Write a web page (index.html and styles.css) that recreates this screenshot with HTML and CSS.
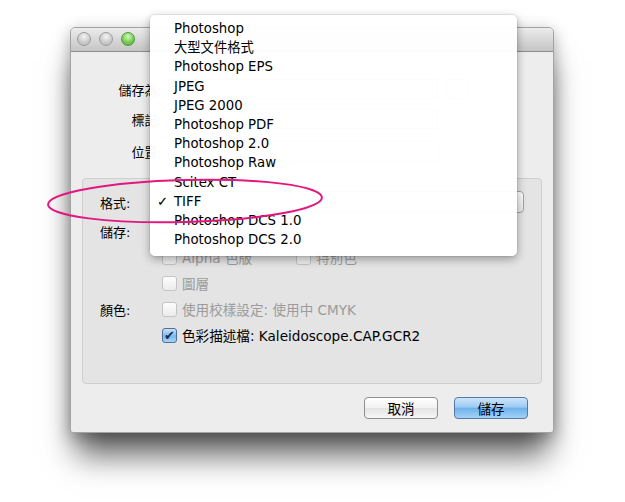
FILE: index.html
```html
<!DOCTYPE html>
<html lang="zh-Hant">
<head>
    <meta charset="UTF-8">
    <meta name="viewport" content="width=device-width, initial-scale=1.0">
    <title>儲存為</title>
    <link rel="stylesheet" href="styles.css">
</head>
<body>
    <div class="stage">
        <!-- Окно диалога -->
        <div class="window">
            <div class="titlebar">
                <span class="lights">
                    <i class="light"></i>
                    <i class="light"></i>
                    <i class="light green"></i>
                </span>
            </div>

            <div class="content">
                <div class="top-form">
                    <div class="row">
                        <span class="label">儲存為:</span>
                        <div class="field"></div>
                        <span class="disclose"></span>
                    </div>
                    <div class="row">
                        <span class="label">標記:</span>
                        <div class="field"></div>
                    </div>
                    <div class="row third">
                        <span class="label">位置:</span>
                        <div class="popup place"></div>
                    </div>
                </div>

                <div class="group">
                    <div class="grow first">
                        <span class="glabel">格式:</span>
                        <div class="popup format"></div>
                    </div>
                    <div class="grow">
                        <span class="glabel">儲存:</span>
                        <span class="check col"><i class="box"></i></span>
                        <span class="check"><i class="box"></i></span>
                    </div>
                    <div class="grow">
                        <span class="glabel"></span>
                        <span class="check off col"><i class="box"></i>Alpha 色版</span>
                        <span class="check off"><i class="box"></i>特別色</span>
                    </div>
                    <div class="grow">
                        <span class="glabel"></span>
                        <span class="check off"><i class="box"></i>圖層</span>
                    </div>
                    <div class="grow">
                        <span class="glabel">顏色:</span>
                        <span class="check off"><i class="box"></i>使用校樣設定: 使用中 CMYK</span>
                    </div>
                    <div class="grow">
                        <span class="glabel"></span>
                        <span class="check on"><i class="box">&#10004;</i>色彩描述檔: Kaleidoscope.CAP.GCR2</span>
                    </div>
                </div>

                <div class="buttons">
                    <button class="btn">取消</button>
                    <button class="btn primary">儲存</button>
                </div>
            </div>
        </div>

        <!-- Выпадающее меню форматов -->
        <ul class="menu">
            <li>Photoshop</li>
            <li>大型文件格式</li>
            <li>Photoshop EPS</li>
            <li>JPEG</li>
            <li>JPEG 2000</li>
            <li>Photoshop PDF</li>
            <li>Photoshop 2.0</li>
            <li>Photoshop Raw</li>
            <li>Scitex CT</li>
            <li class="checked">TIFF</li>
            <li>Photoshop DCS 1.0</li>
            <li>Photoshop DCS 2.0</li>
        </ul>

        <!-- Пометка вокруг строки формата -->
        <svg class="ring" width="300" height="60" viewBox="0 0 300 60">
            <ellipse cx="139" cy="31" rx="137" ry="21" transform="rotate(-1.5 139 31)"
                     fill="none" stroke="#e2177f" stroke-width="2"/>
        </svg>
    </div>
</body>
</html>
```

FILE: styles.css
```css
body {
    margin: 0;
    background: #fff;
    font-family: "DejaVu Sans", "Noto Sans CJK TC", sans-serif;
    font-size: 13px;
    color: #000;
}

.stage {
    position: relative;
    width: 625px;
    height: 502px;
    overflow: hidden;
}

/* Окно */
.window {
    box-sizing: border-box;
    width: 484px;
    height: 406px;
    margin: 27px 0 0 70px;
    display: flex;
    flex-direction: column;
    background: #ededed;
    border: 1px solid #a3a3a3;
    border-radius: 5px 5px 3px 3px;
    box-shadow: 0 28px 30px -6px rgba(0, 0, 0, 0.62), 0 4px 16px rgba(0, 0, 0, 0.3);
}

.titlebar {
    position: relative;
    height: 23px;
    flex: none;
    background: linear-gradient(to bottom, #ececec, #d4d4d4 60%, #c6c6c6);
    border-bottom: 1px solid #8c8c8c;
    border-radius: 4px 4px 0 0;
}

.lights {
    position: absolute;
    left: 6px;
    top: 4px;
    display: flex;
    gap: 8px;
}

.light {
    width: 12px;
    height: 12px;
    border-radius: 50%;
    border: 1px solid #9c9c9c;
    background: radial-gradient(circle at 50% 30%, #f4f4f4, #c9c9c9 60%, #b8b8b8);
}

.light.green {
    border-color: #4f9a36;
    background: radial-gradient(circle at 50% 30%, #d6f7c4, #79cc55 55%, #4fa832);
}

.content {
    flex: 1;
    padding: 26px 11px 0 11px;
    display: flex;
    flex-direction: column;
}

/* Верхние поля */
.top-form {
    display: flex;
    flex-direction: column;
    gap: 8px;
}

.row {
    display: flex;
    align-items: center;
    height: 22px;
}

.row.third {
    margin-top: 2px;
}

.label {
    width: 80px;
    text-align: right;
    padding-right: 6px;
}

.field {
    width: 270px;
    height: 20px;
    border: 1px solid #9a9a9a;
    background: #fff;
    box-sizing: border-box;
}

.disclose {
    width: 20px;
    height: 18px;
    margin-left: 8px;
    border: 1px solid #a0a0a0;
    border-radius: 4px;
    background: linear-gradient(to bottom, #fff, #e3e3e3);
}

.popup {
    box-sizing: border-box;
    height: 21px;
    border: 1px solid #a3a3a3;
    border-radius: 4px;
    background: linear-gradient(to bottom, #fff, #e6e6e6);
}

.popup.place {
    width: 272px;
}

/* Группа параметров */
.group {
    box-sizing: border-box;
    height: 206px;
    margin-top: 16px;
    padding: 12px 0 0 17px;
    background: #e4e4e4;
    border: 1px solid #cfcfcf;
    border-radius: 4px;
}

.grow {
    display: flex;
    align-items: center;
    height: 26px;
}

.grow.first {
    height: 22px;
    margin-bottom: 5px;
}

.glabel {
    width: 62px;
    flex: none;
}

.popup.format {
    width: 362px;
    height: 22px;
}

.check {
    display: flex;
    align-items: center;
    gap: 5px;
    font-size: 13.6px;
}

.check.col {
    width: 134px;
}

.check.off {
    color: #9b9b9b;
}

.box {
    box-sizing: border-box;
    width: 15px;
    height: 15px;
    border: 1px solid #c4c4c4;
    border-radius: 3px;
    background: linear-gradient(to bottom, #fdfdfd, #ececec);
    font-style: normal;
    font-size: 13px;
    line-height: 13px;
    text-align: center;
    color: #1c2c52;
}

.check.on .box {
    border-color: #4f6f9e;
    background: linear-gradient(to bottom, #c9e2f9, #7db8ec 55%, #a9d3f6);
}

/* Кнопки */
.buttons {
    display: flex;
    justify-content: flex-end;
    gap: 16px;
    margin-top: 13px;
    padding-right: 14px;
}

.btn {
    width: 74px;
    height: 22px;
    font: inherit;
    font-size: 13.5px;
    color: #000;
    border: 1px solid #8e8e8e;
    border-radius: 4px;
    background: linear-gradient(to bottom, #ffffff, #f1f1f1 50%, #e4e4e4 51%, #f6f6f6);
    padding: 0;
}

.btn.primary {
    border-color: #5877a6;
    background: linear-gradient(to bottom, #cde5fa, #9ccbf3 45%, #6fb2ec 52%, #a3d2f7);
}

/* Меню форматов */
.menu {
    position: absolute;
    left: 150px;
    top: 15px;
    width: 367px;
    height: 241px;
    box-sizing: border-box;
    margin: 0;
    padding: 4px 0 0 0;
    list-style: none;
    font-size: 13.3px;
    background: rgba(255, 255, 255, 0.97);
    border-radius: 5px;
    box-shadow: 0 3px 10px rgba(0, 0, 0, 0.35), 0 0 0 1px rgba(0, 0, 0, 0.06);
}

.menu li {
    position: relative;
    height: 19.2px;
    line-height: 19px;
    padding-left: 24px;
}

.menu li.checked::before {
    content: "\2713";
    position: absolute;
    left: 7px;
    font-weight: bold;
}

/* Эллипс-пометка */
.ring {
    position: absolute;
    left: 46px;
    top: 170px;
}
```
